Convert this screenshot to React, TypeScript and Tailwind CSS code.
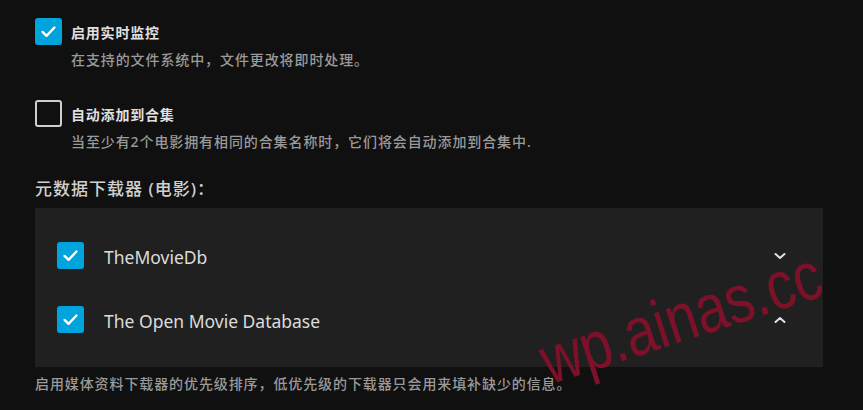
import React from "react";

const FONT = { fontFamily: '"Noto Sans", "Noto Sans CJK SC", sans-serif' };

function Check({ checked }: { checked: boolean }) {
    return checked ? (
        <span className="w-[27px] h-[27px] shrink-0 rounded-[3px] bg-[#00a4dc] flex items-center justify-center">
            <svg viewBox="0 0 24 24" className="w-[19px] h-[19px]" fill="none" stroke="white" strokeWidth="3" strokeLinecap="round" strokeLinejoin="round">
                <path d="M4.5 12.5l5 5L19.5 7" />
            </svg>
        </span>
    ) : (
        <span className="w-[27px] h-[27px] shrink-0 rounded-[3px] border-2 border-[#cfcfcf]" />
    );
}

const PROVIDERS = [
    { name: "TheMovieDb", dir: "down" },
    { name: "The Open Movie Database", dir: "up" },
];

export default function App() {
    return (
        <div className="relative w-full h-[410px] overflow-hidden bg-[#101010] pl-[35px] pr-[40px] pt-[18px]" style={FONT}>
            {/* Realtime monitor */}
            <div className="flex items-start gap-[9px]">
                <Check checked />
                <div className="pt-[5px]">
                    <p className="text-[14px] leading-[20px] font-semibold tracking-[0.8px] text-[#e0e0e0]">启用实时监控</p>
                    <p className="mt-[8px] text-[14px] leading-[18px] font-medium tracking-[0.9px] text-[#9a9a9a]">在支持的文件系统中，文件更改将即时处理。</p>
                </div>
            </div>

            {/* Auto collections */}
            <div className="flex items-start gap-[9px] mt-[31px]">
                <Check checked={false} />
                <div className="pt-[5px]">
                    <p className="text-[14px] leading-[20px] font-semibold tracking-[0.8px] text-[#e0e0e0]">自动添加到合集</p>
                    <p className="mt-[8px] text-[14px] leading-[18px] font-medium tracking-[0.9px] text-[#9a9a9a]">当至少有2个电影拥有相同的合集名称时，它们将会自动添加到合集中.</p>
                </div>
            </div>

            {/* Metadata downloaders */}
            <h3 className="mt-[26px] text-[17px] leading-[24px] font-medium tracking-[1px] text-[#d0d0d0]">元数据下载器 (电影)：</h3>
            <div className="mt-[7px] bg-[#202020] h-[159px] pt-[34px] pl-[22px] pr-[36px]">
                {PROVIDERS.map((p) => (
                    <div key={p.name} className="flex items-center h-[27px] mb-[37px]">
                        <Check checked />
                        <span className="ml-[20px] mt-[4px] text-[17.5px] text-[#dcdcdc]">{p.name}</span>
                        <span className="ml-auto w-[14px] flex justify-center">
                            <svg viewBox="0 0 14 8" className="w-[14px] h-[8px]" fill="none" stroke="#e0e0e0" strokeWidth="2" strokeLinecap="round" strokeLinejoin="round">
                                {p.dir === "down" ? <path d="M2.5 2l4.5 4 4.5-4" /> : <path d="M2.5 6l4.5-4 4.5 4" />}
                            </svg>
                        </span>
                    </div>
                ))}
            </div>
            <p className="mt-[8px] text-[14px] leading-[18px] font-medium tracking-[0.9px] text-[#9a9a9a]">启用媒体资料下载器的优先级排序，低优先级的下载器只会用来填补缺少的信息。</p>

            {/* watermark */}
            <span
                className="absolute left-[503px] top-[283px] -rotate-[18deg] scale-x-[0.82] text-[68px] leading-none text-[#7d1129] whitespace-nowrap pointer-events-none"
                style={{ fontFamily: '"Liberation Sans", Arial, sans-serif' }}
            >
                wp.ainas.cc
            </span>
        </div>
    );
}
